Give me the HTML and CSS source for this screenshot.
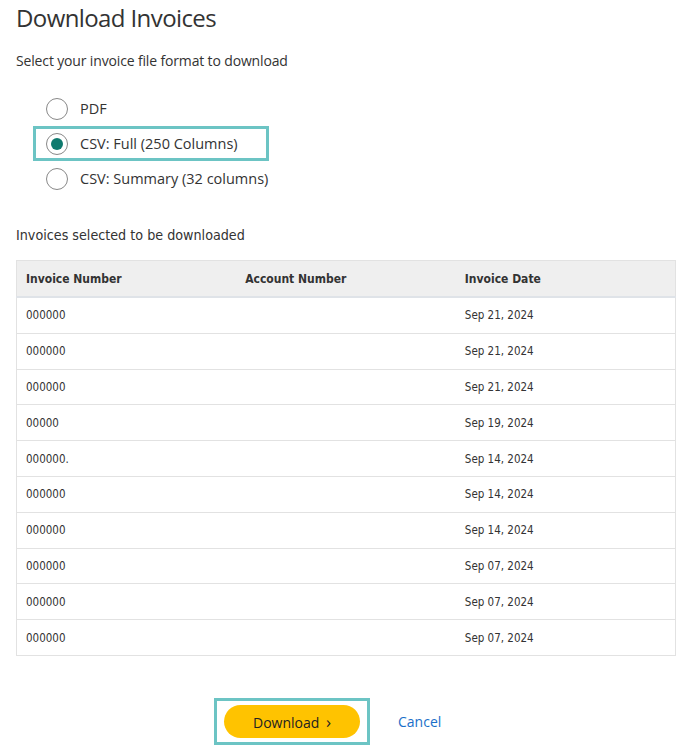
FILE: index.html
```html
<!DOCTYPE html>
<html lang="en">
<head>
  <meta charset="UTF-8">
  <meta name="viewport" content="width=device-width, initial-scale=1.0">
  <title>Download Invoices</title>
  <link rel="stylesheet" href="styles.css">
</head>
<body>
  <h1>Download Invoices</h1>
  <p class="lead">Select your invoice file format to download</p>

  <div class="formats">
    <label class="option">
      <span class="radio"></span>
      <span>PDF</span>
    </label>
    <label class="option selected">
      <span class="radio checked"></span>
      <span>CSV: Full (250 Columns)</span>
    </label>
    <label class="option">
      <span class="radio"></span>
      <span>CSV: Summary (32 columns)</span>
    </label>
  </div>

  <p class="caption">Invoices selected to be downloaded</p>

  <table class="invoices">
    <thead>
      <tr>
        <th>Invoice Number</th>
        <th>Account Number</th>
        <th>Invoice Date</th>
      </tr>
    </thead>
    <tbody>
      <tr><td>000000</td><td></td><td>Sep 21, 2024</td></tr>
      <tr><td>000000</td><td></td><td>Sep 21, 2024</td></tr>
      <tr><td>000000</td><td></td><td>Sep 21, 2024</td></tr>
      <tr><td>00000</td><td></td><td>Sep 19, 2024</td></tr>
      <tr><td>000000.</td><td></td><td>Sep 14, 2024</td></tr>
      <tr><td>000000</td><td></td><td>Sep 14, 2024</td></tr>
      <tr><td>000000</td><td></td><td>Sep 14, 2024</td></tr>
      <tr><td>000000</td><td></td><td>Sep 07, 2024</td></tr>
      <tr><td>000000</td><td></td><td>Sep 07, 2024</td></tr>
      <tr><td>000000</td><td></td><td>Sep 07, 2024</td></tr>
    </tbody>
  </table>

  <div class="actions">
    <div class="focus-box">
      <button class="download">Download <span class="chev">&rsaquo;</span></button>
    </div>
    <a href="#" class="cancel">Cancel</a>
  </div>
</body>
</html>
```

FILE: styles.css
```css
body {
  font-family: "Open Sans", "Noto Sans", sans-serif;
  color: #333;
  margin: 0;
  padding: 0 12px 0 16px;
  background: #fff;
}
h1 {
  font-weight: 400;
  font-size: 24px;
  letter-spacing: -0.6px;
  margin: 2px 0 0;
  line-height: 32px;
  color: #333;
}
.lead {
  font-size: 14px;
  letter-spacing: -0.15px;
  margin: 17px 0 0;
  line-height: 20px;
}
.formats {
  display: flex;
  flex-direction: column;
  align-items: flex-start;
  margin: 20px 0 0 17px;
}
.option {
  display: flex;
  align-items: center;
  gap: 12px;
  height: 35px;
  padding: 0 28px 0 10px;
  font-size: 14.5px;
  border: 3px solid transparent;
  box-sizing: border-box;
}
.option.selected {
  border-color: #6cc4c4;
}
.radio {
  width: 22px;
  height: 22px;
  border: 1px solid #888;
  border-radius: 50%;
  box-sizing: border-box;
  position: relative;
  background: #fff;
}
.radio.checked::after {
  content: "";
  position: absolute;
  left: 4px;
  top: 4px;
  width: 12px;
  height: 12px;
  border-radius: 50%;
  background: #0f7a6e;
}
.caption {
  font-family: "DejaVu Sans Condensed", "DejaVu Sans", sans-serif;
  font-size: 14.2px;
  margin: 29px 0 0;
  line-height: 20px;
}
.invoices {
  margin-top: 15px;
  width: 660px;
  border-collapse: collapse;
  border: 1px solid #e2e2e2;
  font-family: "DejaVu Sans Condensed", "DejaVu Sans", sans-serif;
  font-size: 11.5px;
  table-layout: fixed;
}
.invoices th {
  background: #efefef;
  text-align: left;
  font-weight: 700;
  font-size: 12px;
  height: 35px;
  padding: 0 9px;
  border-bottom: 2px solid #dfe3e8;
  color: #333;
}
.invoices td {
  height: 34.8px;
  padding: 0 9px;
  border-bottom: 1px solid #e2e2e2;
  color: #333;
}
.actions {
  display: flex;
  align-items: center;
  gap: 28px;
  margin: 42px 0 0 198px;
}
.focus-box {
  border: 3px solid #6cc4c4;
  padding: 4px 7px;
}
.download {
  background: #ffc300;
  border: none;
  border-radius: 17px;
  width: 136px;
  height: 33px;
  font-family: "Open Sans", "Noto Sans", sans-serif;
  font-size: 14px;
  color: #222;
  cursor: pointer;
}
.chev {
  font-size: 17px;
  margin-left: 3px;
}
.cancel {
  color: #1a6fc9;
  text-decoration: none;
  font-size: 14px;
}
```
